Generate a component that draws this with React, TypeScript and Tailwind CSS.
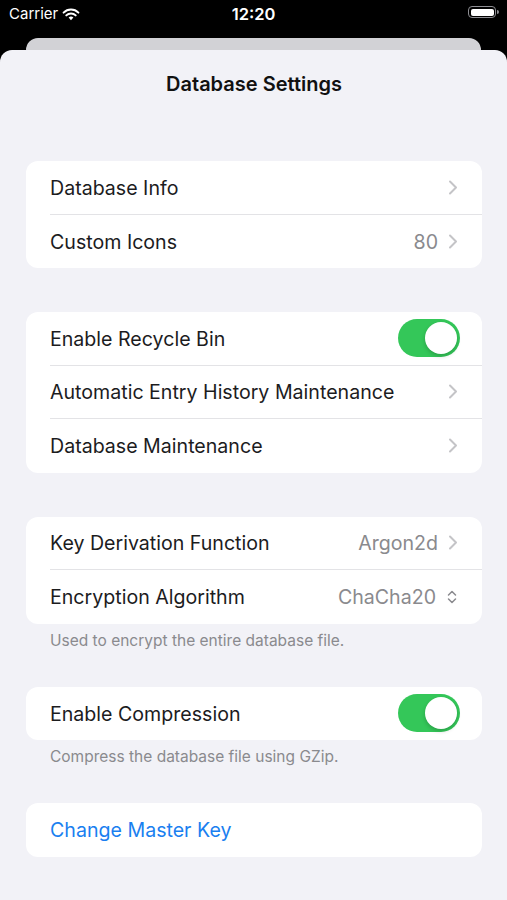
import React from "react";

const font = { fontFamily: "Inter, 'Noto Sans', 'Liberation Sans', sans-serif" };

function Chevron() {
  return (
    <svg width="10" height="15" viewBox="0 0 10 15" className="shrink-0">
      <path d="M2 1.5 L8 7.5 L2 13.5" fill="none" stroke="#c4c4c7" strokeWidth="2" strokeLinecap="round" strokeLinejoin="round" />
    </svg>
  );
}

function UpDown() {
  return (
    <svg width="12" height="16" viewBox="0 0 12 16" className="shrink-0">
      <path d="M2.5 6 L6 2.5 L9.5 6 M2.5 10 L6 13.5 L9.5 10" fill="none" stroke="#8a8a8e" strokeWidth="1.5" strokeLinecap="round" strokeLinejoin="round" />
    </svg>
  );
}

function Toggle() {
  return (
    <div className="w-[62px] h-[38px] rounded-full bg-[#34c759] p-[3px] flex justify-end shrink-0">
      <div className="w-[32px] h-[32px] rounded-full bg-white shadow-[0_2px_4px_rgba(0,0,0,0.2)]" />
    </div>
  );
}

function Row({
  label,
  value,
  accessory,
  last,
  blue,
}: {
  label: string;
  value?: string;
  accessory?: "chevron" | "toggle" | "updown";
  last?: boolean;
  blue?: boolean;
}) {
  return (
    <div className="h-[53.5px] pl-[24px] flex">
      <div className={`flex-1 flex items-center pr-[24px] ${last ? "" : "border-b border-[#e3e3e6]"}`}>
        <span className={`flex-1 pt-[2px] text-[19.6px] ${blue ? "text-[#1a7ff0]" : "text-[#1c1c1e]"}`}>{label}</span>
        {value && <span className="pt-[2px] text-[19.6px] text-[#8a8a8e] mr-[10px]">{value}</span>}
        {accessory === "chevron" && <Chevron />}
        {accessory === "updown" && <UpDown />}
        {accessory === "toggle" && <div className="-mr-[2px]"><Toggle /></div>}
      </div>
    </div>
  );
}

function Group({ children }: { children: React.ReactNode }) {
  return <div className="bg-white rounded-[12px] overflow-hidden">{children}</div>;
}

function Footer({ text }: { text: string }) {
  return <div className="pl-[24px] pt-[7px] h-[63px] text-[15.5px] leading-[20px] text-[#8a8a8e]">{text}</div>;
}

export default function App() {
  return (
    <div className="w-[507px] h-[900px] bg-black overflow-hidden flex flex-col" style={font}>
      <div className="h-[38px] flex items-start pt-[5px] px-[9px] relative text-white">
        <div className="flex items-center gap-[4px]">
          <span className="text-[15px] leading-[18px]">Carrier</span>
          <svg width="18" height="13" viewBox="0 0 18 13">
            <path d="M9 12.2 L6.6 9.6 A3.4 3.4 0 0 1 11.4 9.6 Z" fill="white" />
            <path d="M4.3 7.4 A6.6 6.6 0 0 1 13.7 7.4" fill="none" stroke="white" strokeWidth="2" strokeLinecap="round" />
            <path d="M1.6 4.6 A10.4 10.4 0 0 1 16.4 4.6" fill="none" stroke="white" strokeWidth="2" strokeLinecap="round" />
          </svg>
        </div>
        <div className="absolute left-0 right-0 top-[5px] text-center text-[16.5px] leading-[18px] font-semibold">12:20</div>
        <div className="absolute right-[8px] top-[6px] flex items-center">
          <div className="w-[28px] h-[12px] rounded-[4px] border border-[#8e8e93] p-[1.5px]">
            <div className="w-full h-full bg-white rounded-[2px]" />
          </div>
          <div className="w-[2px] h-[4px] bg-[#8e8e93] rounded-r-sm ml-[1px]" />
        </div>
      </div>
      <div className="mx-[26px] h-[12px] bg-[#d2d2d6] rounded-t-[12px]" />
      <div className="flex-1 bg-[#f2f2f7] rounded-t-[12px] pl-[26px] pr-[25px]">
        <div className="h-[68px] flex items-center justify-center text-[20px] font-semibold text-[#111]">
          Database Settings
        </div>
        <div className="mt-[43px]">
          <Group>
            <Row label="Database Info" accessory="chevron" />
            <Row label="Custom Icons" value="80" accessory="chevron" last />
          </Group>
        </div>
        <div className="mt-[44px]">
          <Group>
            <Row label="Enable Recycle Bin" accessory="toggle" />
            <Row label="Automatic Entry History Maintenance" accessory="chevron" />
            <Row label="Database Maintenance" accessory="chevron" last />
          </Group>
        </div>
        <div className="mt-[44px]">
          <Group>
            <Row label="Key Derivation Function" value="Argon2d" accessory="chevron" />
            <Row label="Encryption Algorithm" value="ChaCha20" accessory="updown" last />
          </Group>
          <Footer text="Used to encrypt the entire database file." />
        </div>
        <Group>
          <Row label="Enable Compression" accessory="toggle" last />
        </Group>
        <Footer text="Compress the database file using GZip." />
        <Group>
          <Row label="Change Master Key" blue last />
        </Group>
      </div>
    </div>
  );
}
